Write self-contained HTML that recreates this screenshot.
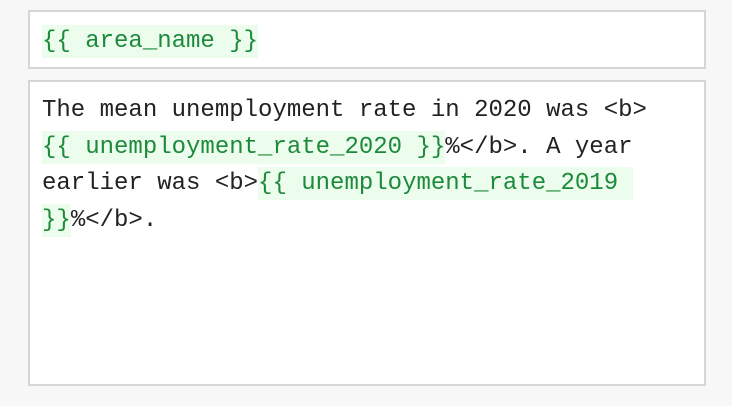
<!DOCTYPE html>
<html><head><style>
html,body{margin:0;padding:0;background:#f7f7f7;width:732px;height:406px;overflow:hidden}
.box{position:absolute;left:28px;width:674px;background:#fff;border:2px solid #d6d6d6}
.t{font-family:"Liberation Mono",monospace;font-size:24px;color:#222;white-space:pre;line-height:36.5px;padding-left:12px}
.h{background:#ecfdee;color:#1d8a3b;padding:3px 0 3px}
</style></head><body>
<div class="box" style="top:10px;height:55px"><div class="t" style="padding-top:9px;line-height:41px"><span class="h">{{ area_name }}</span></div></div>
<div class="box" style="top:80px;height:302px"><div class="t" style="padding-top:11px">The mean unemployment rate in 2020 was &lt;b&gt;
<span class="h">{{ unemployment_rate_2020 }}</span>%&lt;/b&gt;. A year
earlier was &lt;b&gt;<span class="h">{{ unemployment_rate_2019 </span>
<span class="h">}}</span>%&lt;/b&gt;.</div></div>
</body></html>
